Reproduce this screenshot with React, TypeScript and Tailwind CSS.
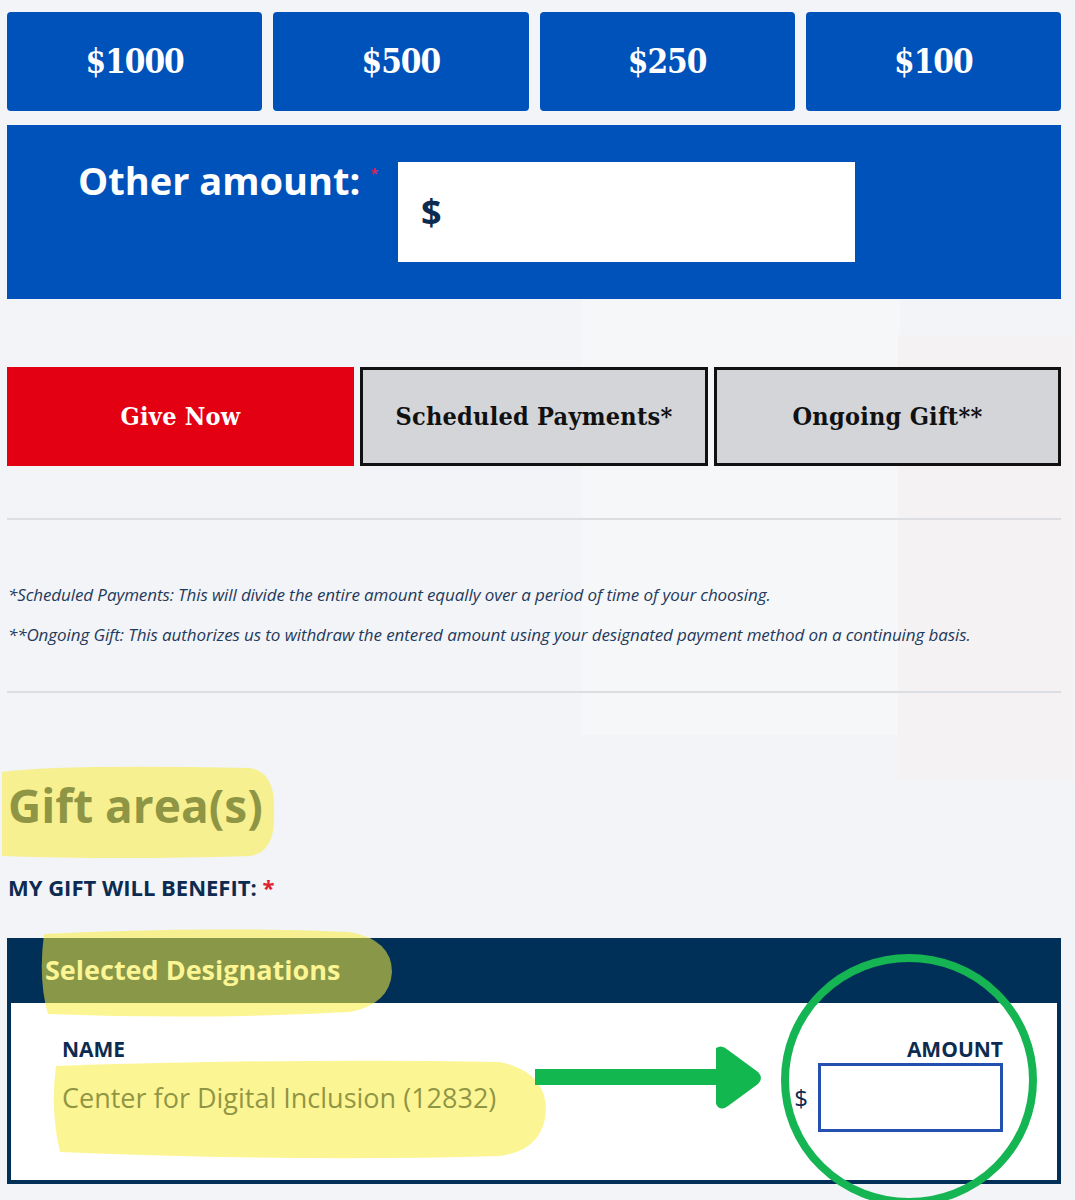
import React from 'react';

const slab = { fontFamily: '"DejaVu Serif", "Liberation Serif", serif' };
const sans = { fontFamily: '"Open Sans", "Noto Sans", sans-serif' };

const amounts = ['$1000', '$500', '$250', '$100'];

function Annotations() {
  // hand-drawn marks that sit on top of the form
  return (
    <svg className="absolute inset-0 pointer-events-none" width="1075" height="1200" viewBox="0 0 1075 1200">
      <path
        d="M2 772 Q60 764 250 768 Q276 772 274 812 Q276 852 250 856 Q120 860 2 856 Z"
        fill="rgba(250,236,60,0.55)"
      />
      <path
        d="M44 934 Q200 926 350 932 Q392 940 392 972 Q390 1004 350 1012 Q200 1020 48 1014 Q38 980 44 934 Z"
        fill="rgba(250,236,60,0.55)"
      />
      <path
        d="M56 1066 Q300 1058 500 1062 Q546 1072 546 1110 Q544 1150 500 1156 Q300 1162 60 1152 Q50 1110 56 1066 Z"
        fill="rgba(250,236,60,0.55)"
      />
      <path d="M535 1069 L716 1069 L716 1048 Q722 1044 728 1050 L758 1072 Q764 1078 758 1084 L728 1106 Q720 1112 716 1104 L716 1085 L535 1085 Z" fill="#12b84f" />
      <ellipse cx="909" cy="1080" rx="124" ry="122" fill="none" stroke="#16b553" strokeWidth="8" />
    </svg>
  );
}

export default function App() {
  return (
    <div className="relative w-[1075px] h-[1200px] overflow-hidden bg-[#f2f4f7]" style={sans}>
      {/* faint page panels showing through behind the form */}
      <div className="absolute left-[582px] top-[300px] w-[318px] h-[435px] bg-[#f6f7f9]" />
      <div className="absolute left-[898px] top-[335px] w-[177px] h-[445px] bg-[#f5f2f4]" />

      <div className="relative pl-[7px] pr-[14px] pt-[12px]">
        <div className="grid grid-cols-4 gap-[11px] h-[99px]">
          {amounts.map((a) => (
            <div
              key={a}
              className="flex items-center justify-center rounded-[4px] bg-[#0052bb] text-white text-[33px] font-bold font-stretch-condensed tracking-[-1px]"
              style={slab}
            >
              {a}
            </div>
          ))}
        </div>

        <div className="mt-[14px] h-[174px] bg-[#0052bb] flex items-start">
          <div className="pl-[71px] pt-[36px] text-white text-[38px] font-bold leading-none flex">
            Other amount:
            <span className="ml-[10px] mt-[6px] text-[#d8245a] text-[14px]">*</span>
          </div>
          <div className="ml-[20px] mt-[37px] w-[457px] h-[100px] bg-white flex items-center pl-[23px]">
            <span className="text-[#0d2b50] text-[36px] font-bold">$</span>
          </div>
        </div>

        <div className="mt-[68px] flex gap-[6px] h-[99px] font-stretch-condensed tracking-[0.25px]" style={slab}>
          <div className="w-[347px] flex items-center justify-center bg-[#e30012] text-white text-[25px] font-bold">
            Give Now
          </div>
          <div className="w-[348px] flex items-center justify-center bg-[#d4d5d8] border-[3px] border-[#111] text-[#111] text-[25px] font-bold">
            Scheduled Payments*
          </div>
          <div className="flex-1 flex items-center justify-center bg-[#d4d5d8] border-[3px] border-[#111] text-[#111] text-[25px] font-bold">
            Ongoing Gift**
          </div>
        </div>

        <div className="mt-[52px] h-[2px] bg-[#dcdee2]" />

        <div className="pt-[66px] pl-[1px] text-[#1f3a5c] text-[17px] italic tracking-[-0.1px] leading-none">
          <p>*Scheduled Payments: This will divide the entire amount equally over a period of time of your choosing.</p>
          <p className="mt-[23px]">**Ongoing Gift: This authorizes us to withdraw the entered amount using your designated payment method on a continuing basis.</p>
        </div>

        <div className="mt-[48px] h-[2px] bg-[#dcdee2]" />

        <h2 className="mt-[89px] pl-[1px] text-[#0d2b50] text-[46px] font-bold leading-none">Gift area(s)</h2>

        <div className="mt-[48px] pl-[1px] text-[#0d2b50] text-[22px] font-bold leading-none">
          MY GIFT WILL BENEFIT: <span className="text-[#e0202e]">*</span>
        </div>

        <div className="mt-[40px] border-[4px] border-t-0 border-[#003058] bg-white">
          <div className="h-[65px] bg-[#003058] flex items-center pl-[34px] text-white text-[27px] font-bold">
            Selected Designations
          </div>
          <div className="h-[177px] flex justify-between pl-[51px] pr-[54px] pt-[36px]">
            <div>
              <div className="text-[#0d2b50] text-[21px] font-bold leading-none">NAME</div>
              <div className="mt-[24px] text-[#0d2b50] text-[27px] leading-none">Center for Digital Inclusion (12832)</div>
            </div>
            <div className="flex flex-col items-end">
              <div className="text-[#0d2b50] text-[21px] font-bold leading-none">AMOUNT</div>
              <div className="mt-[3px] flex items-center">
                <span className="mr-[10px] text-[#0d2b50] text-[24px]">$</span>
                <div className="w-[185px] h-[69px] border-[3px] border-[#2451b0] bg-white" />
              </div>
            </div>
          </div>
        </div>
      </div>
      <Annotations />
    </div>
  );
}
